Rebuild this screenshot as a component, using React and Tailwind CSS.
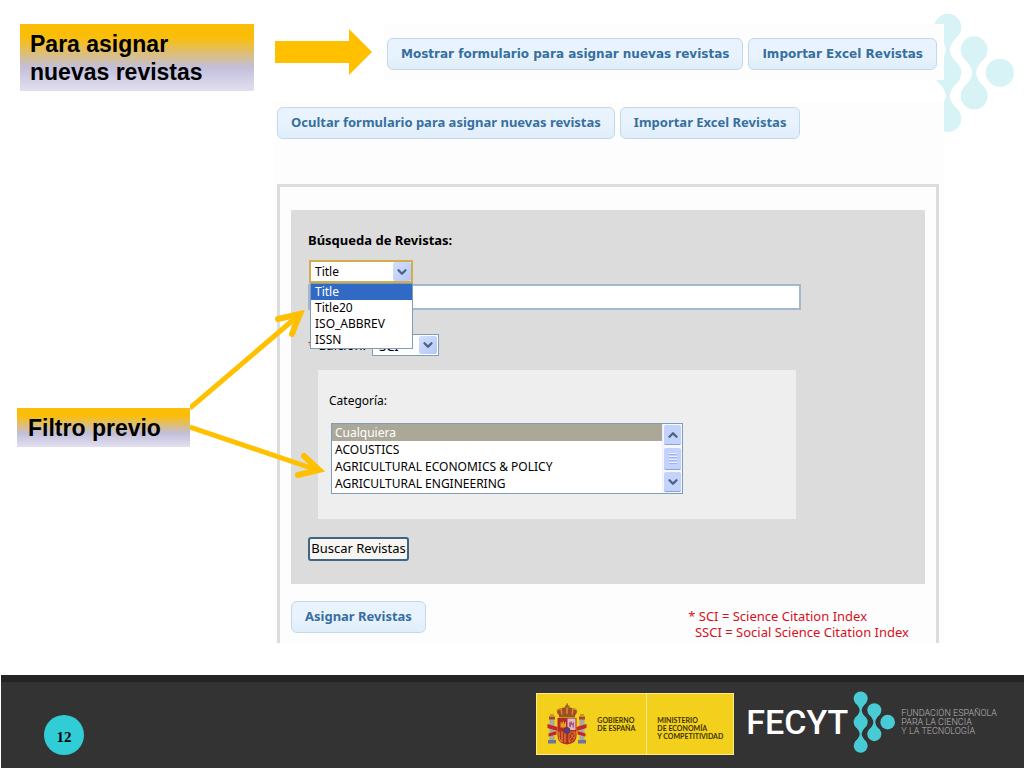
import { ChevronDown, ChevronUp } from 'lucide-react';

const searchFields = ['Title', 'Title20', 'ISO_ABBREV', 'ISSN'];
const categories = ['Cualquiera', 'ACOUSTICS', 'AGRICULTURAL ECONOMICS & POLICY', 'AGRICULTURAL ENGINEERING'];

const ActionButton = ({ className = 'text-[13px]', children }) => (
  <button
    type="button"
    className={`h-8 whitespace-nowrap rounded-md border border-[#c3d9e8] bg-linear-to-b from-[#e8f3fe] from-50% to-[#dfeefa] px-[13px] font-bold text-[#376f9f] ${className}`}
  >
    {children}
  </button>
);

const Callout = ({ className, children }) => (
  <div
    className={`bg-linear-to-b/srgb from-[#fbbe08] from-20% via-[#c2bfdb] via-65% to-[#e2e0ef] font-['Liberation_Sans',sans-serif] text-[23px] leading-7 font-bold text-black ${className}`}
  >
    {children}
  </div>
);

const SelectArrow = () => (
  <span className="pointer-events-none absolute inset-y-0.5 right-0.5 flex w-[18px] items-center justify-center rounded-xs bg-linear-to-br from-[#d3e0fd] to-[#b4c8f6] text-[#4d6185]">
    <ChevronDown size={14} strokeWidth={4} />
  </span>
);

// Three columns of drops joined by thin necks
const Drops = ({ className }) => (
  <svg viewBox="0 0 126 185" className={className} fill="currentColor" aria-hidden="true">
    <circle cx="23" cy="22" r="21" />
    <circle cx="23" cy="93" r="21" />
    <circle cx="23" cy="164" r="21" />
    <circle cx="64" cy="57" r="21" />
    <circle cx="64" cy="129" r="21" />
    <circle cx="104" cy="93" r="22" />
    <path d="M5 33Q20 48 20 57.500Q20 67 5 82H41Q26 67 26 57.500Q26 48 41 33Z" />
    <path d="M5 104Q20 119 20 128.500Q20 138 5 153H41Q26 138 26 128.500Q26 119 41 104Z" />
    <path d="M46 68Q61 83 61 93Q61 103 46 118H82Q67 103 67 93Q67 83 82 68Z" />
  </svg>
);

const CoatOfArms = () => (
  <svg viewBox="0 0 80 84" className="h-[42px] w-10 shrink-0" aria-label="Escudo de España" role="img">
    <path d="M39 1h3v4h3v3h-3v5h-3V8h-3V5h3z" fill="#8b6a1c" />
    <path d="M24 25Q14 12 27 11Q40 5 53 11Q66 12 56 25Z" fill="#a8472a" />
    <path d="M20 16Q22 10 30 13M40 9V22M60 16Q58 10 50 13M29 13Q28 19 30 23M51 13Q52 19 50 23" stroke="#c99a20" strokeWidth="3" fill="none" />
    <path d="M24 24H56V29H24Z" fill="#8f5c1d" />
    <g fill="#aaa6a0">
      <path d="M5 32H15V76H5ZM65 32H75V76H65Z" />
    </g>
    <path d="M4 27H16V33H4ZM64 27H76V33H64Z" fill="#a8472a" />
    <path d="M6 22H14V27H6ZM66 22H74V27H66Z" fill="#c99a20" />
    <path d="M2 74H18V81H2ZM62 74H78V81H62Z" fill="#6e7693" />
    <path d="M1 42L21 48V56L1 50ZM79 42L59 48V56L79 50ZM3 61L19 56V63L3 67ZM77 61L61 56V63L77 67Z" fill="#c0292b" />
    <path d="M21 30H59V66Q59 81 40 83Q21 81 21 66Z" fill="#b42a28" />
    <path d="M41 31H57V54H41Z" fill="#dfb9c1" />
    <path d="M44 47V40L48 36L51 41L54 37V49H51V44H48V49Z" fill="#a2587f" />
    <path d="M27 49V38H29V41H31V37H34V41H36V38H38V49Z" fill="#dfa520" />
    <path d="M24 57V67Q25 75 29 78M30 57V78M36 58V79" stroke="#dfa520" strokeWidth="2" fill="none" />
    <path d="M44 58H56V68Q54 75 44 79Z" fill="none" stroke="#cf8120" strokeWidth="2" />
    <path d="M44 58L56 73M56 58L44 76" stroke="#cf8120" strokeWidth="2" />
    <circle cx="40" cy="55" r="6" fill="#394b8b" stroke="#8d2434" strokeWidth="2" />
  </svg>
);

function SearchForm() {
  return (
    <form className="bg-[#dcdcdc] pt-5 pr-4 pb-[23px] pl-[17px]">
      <h2 className="text-[13px] leading-5 font-bold">Búsqueda de Revistas:</h2>

      <div className="relative mt-2.5 ml-px w-[104px]">
        <select
          aria-label="Campo de búsqueda"
          defaultValue="Title"
          className="block h-[23px] w-full appearance-none border-2 border-[#d3ac4d] bg-white pl-1 text-xs"
        >
          {searchFields.map((field) => (
            <option key={field}>{field}</option>
          ))}
        </select>
        <SelectArrow />
        <ul role="listbox" aria-label="Campos" className="absolute top-full left-px z-10 w-[103px] border border-[#7f9db9] bg-white text-xs leading-4">
          {searchFields.map((field, i) => (
            <li
              key={field}
              role="option"
              aria-selected={i === 0}
              className={`pl-1 ${i === 0 ? 'bg-[#316ac5] text-white' : ''}`}
            >
              {field}
            </li>
          ))}
        </ul>
      </div>

      <input
        type="text"
        aria-label="Texto de búsqueda"
        className="mt-px block h-[26px] w-[82%] border-2 border-[#a3b8cc] bg-white px-1 text-xs"
      />

      <div className="mt-6 flex items-center text-[13px]">
        <label htmlFor="edicion" className="w-16 pt-0.5">
          <span className="text-red-600">*</span> Edición:
        </label>
        <div className="relative w-[67px]">
          <select id="edicion" className="block h-[22px] w-full appearance-none border border-[#7f9db9] bg-white pt-0.5 pl-1.5">
            <option>SCI</option>
            <option>SSCI</option>
          </select>
          <SelectArrow />
        </div>
      </div>

      <div className="mt-3.5 mr-[113px] ml-2.5 bg-[#eee] px-[11px] pt-[21px] pb-[25px]">
        <label htmlFor="categoria" className="block text-xs leading-5">Categoría:</label>
        <div className="mt-3 ml-0.5 flex h-[71px] w-[352px] border border-[#7f9db9] bg-white">
          <select
            id="categoria"
            size={4}
            defaultValue="Cualquiera"
            className="h-full flex-1 appearance-none overflow-hidden bg-white text-xs [scrollbar-width:none]"
          >
            {categories.map((category) => (
              <option
                key={category}
                className="h-[17px] min-h-0 px-[3px] py-0 leading-[17px] checked:bg-[#aca899] checked:bg-linear-to-b checked:from-[#aca899] checked:to-[#aca899] checked:text-white"
              >
                {category}
              </option>
            ))}
          </select>
          <div className="flex w-5 flex-col justify-between border-l border-[#eef1fb] bg-[#f7f8fd] p-px text-[#4d6185]">
            <button type="button" aria-label="Subir" className="flex h-5 items-center justify-center rounded-xs border-b border-[#8ba4d0] bg-[#c3d3fb]">
              <ChevronUp size={14} strokeWidth={4} />
            </button>
            <div className="flex h-[22px] flex-col items-center justify-center gap-px rounded-xs border-b border-[#8ba4d0] bg-[#c3d3fb]">
              {[1, 2, 3, 4].map((line) => (
                <span key={line} className="h-0.5 w-2 border-b border-[#9db2ea] bg-[#eaf0ff]" />
              ))}
            </div>
            <button type="button" aria-label="Bajar" className="flex h-5 items-center justify-center rounded-xs border-b border-[#8ba4d0] bg-[#c3d3fb]">
              <ChevronDown size={14} strokeWidth={4} />
            </button>
          </div>
        </div>
      </div>

      <button
        type="button"
        className="mt-[18px] flex h-6 w-[101px] items-center justify-center rounded-[3px] border-2 border-[#3f6585] bg-[#f6f5f1] text-[13px] whitespace-nowrap"
      >
        Buscar Revistas
      </button>
    </form>
  );
}

function Footer() {
  return (
    <footer className="ml-px flex h-[93px] items-start border-t-7 border-[#222524] bg-[#333] pr-[27px] pl-[43px]">
      <span className="mt-[33px] flex size-10 items-center justify-center rounded-full bg-[#30cdd7] pt-1 font-['Liberation_Serif',serif] text-[15px] font-bold text-black">
        12
      </span>
      <div className="mt-[11px] ml-auto flex h-[62px] w-[198px] shrink-0 border border-[#f8e98a] bg-[#f3d01b] font-['Lato',sans-serif] text-[7px] leading-2 font-bold text-[#3d3208]">
        <div className="flex w-[110px] items-center gap-2.5 border-r border-[#f8e98a] pl-2.5">
          <CoatOfArms />
          <p>GOBIERNO<br />DE ESPAÑA</p>
        </div>
        <p className="pt-[22px] pl-2.5 whitespace-nowrap">MINISTERIO<br />DE ECONOMÍA<br />Y COMPETITIVIDAD</p>
      </div>
      <div className="mt-[9px] ml-3 flex shrink-0 items-center">
        <span className="w-[107px] font-['Roboto',sans-serif] text-[34px] leading-[62px] font-medium text-white">FECYT</span>
        <Drops className="h-[62px] w-[42px] text-[#48cbd5]" />
        <p className="ml-1.5 font-['Roboto',sans-serif] text-[9px] leading-[9px] font-light whitespace-nowrap text-[#b5b5b5]">
          FUNDACIÓN ESPAÑOLA<br />PARA LA CIENCIA<br />Y LA TECNOLOGÍA
        </p>
      </div>
    </footer>
  );
}

export default function App() {
  return (
    <div className="relative flex min-h-screen flex-col bg-white font-['Noto_Sans',sans-serif] text-black">
      <Drops className="absolute top-[13px] right-2.5 h-[119px] w-[81px] text-[#d8f3f5]" />

      <main className="relative flex-1 pt-6 pr-20 pb-[31px]">
        <div className="flex h-[67px] items-start pl-5">
          <Callout className="h-[67px] w-[234px] shrink-0 px-2.5 pt-1.5">
            Para asignar<br />nuevas revistas
          </Callout>
          <svg viewBox="0 0 97 46" className="mt-[5px] ml-[21px] h-[46px] w-[97px] shrink-0" aria-hidden="true">
            <path d="M0 12H74V0L97 23L74 46V34H0Z" fill="#ffc000" />
          </svg>
          <div className="ml-3 flex h-14 flex-1 gap-[5px] bg-[#fdfdfd] pt-3.5 pl-[3px]">
            <ActionButton className="font-['DejaVu_Sans',sans-serif] text-xs">
              Mostrar formulario para asignar nuevas revistas
            </ActionButton>
            <ActionButton className="font-['DejaVu_Sans',sans-serif] text-xs">Importar Excel Revistas</ActionButton>
          </div>
        </div>

        <div className="mt-[11px] flex">
          <div className="w-[275px] shrink-0 pt-[306px] pl-[17px]">
            <div className="relative w-[173px]">
              <Callout className="h-[39px] px-[11px] pt-1.5">Filtro previo</Callout>
              <svg
                viewBox="0 0 140 180"
                className="absolute -top-[108px] left-full z-20 h-[180px] w-[140px]"
                fill="none"
                stroke="#ffc000"
                strokeWidth="5"
                aria-hidden="true"
              >
                <path d="M0 108L109 15" />
                <path d="M88 19L110 14L102 34" strokeWidth="6" strokeLinecap="round" />
                <path d="M0 127L127 170" />
                <path d="M114 156L129 170L108 175" strokeWidth="6" strokeLinecap="round" />
              </svg>
            </div>
          </div>

          <section className="flex-1 bg-[#fdfdfd] pt-[5px] pr-[5px] pl-0.5">
            <div className="flex gap-[5px]">
              <ActionButton>Ocultar formulario para asignar nuevas revistas</ActionButton>
              <ActionButton>Importar Excel Revistas</ActionButton>
            </div>
            <div className="mt-[45px] border-x-3 border-t-3 border-[#dcdcdc] px-[11px] pt-[23px]">
              <SearchForm />
              <div className="flex items-start justify-between pt-[17px] pb-[3px]">
                <ActionButton>Asignar Revistas</ActionButton>
                <p className="mt-[7px] pr-4 text-[13px] leading-4 whitespace-pre text-[#d8101c]">
                  {'* SCI = Science Citation Index\n  SSCI = Social Science Citation Index'}
                </p>
              </div>
            </div>
          </section>
        </div>
      </main>

      <Footer />
    </div>
  );
}
